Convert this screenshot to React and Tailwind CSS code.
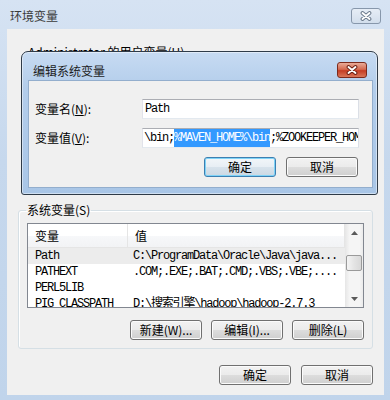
import React from "react";

const MONO = "font-['Liberation_Mono','Noto_Sans_CJK_SC',monospace] text-[12px] tracking-[-1.2px]";

const ROWS = [
  { name: "Path", value: "C:\\ProgramData\\Oracle\\Java\\java...", selected: true },
  { name: "PATHEXT", value: ".COM;.EXE;.BAT;.CMD;.VBS;.VBE;...." },
  { name: "PERL5LIB", value: "" },
  { name: "PIG_CLASSPATH", value: "D:\\搜索引擎\\hadoop\\hadoop-2.7.3" },
];

function XGlyph({ outline }) {
  return (
    <svg width="12" height="10" viewBox="0 0 12 10">
      <path d="M2.5 2 L9.5 8 M9.5 2 L2.5 8" stroke={outline} strokeWidth="3.8" strokeLinecap="round" />
      <path d="M2.5 2 L9.5 8 M9.5 2 L2.5 8" stroke="#ffffff" strokeWidth="1.9" strokeLinecap="round" />
    </svg>
  );
}

function Arrow({ up }) {
  return (
    <svg width="7" height="4" viewBox="0 0 7 4">
      <path d={up ? "M0 4 L3.5 0 L7 4 Z" : "M0 0 L7 0 L3.5 4 Z"} fill="#5a5a5a" />
    </svg>
  );
}

function WinButton({ children, primary }) {
  return (
    <div
      className={
        primary
          ? "w-[72px] h-[20px] flex items-center justify-center rounded-[3px] border border-[#3c7fb1] bg-[linear-gradient(#f2f6f9,#e7eef4_50%,#d8e3ec_50%,#cbd8e3)] shadow-[inset_0_0_0_1px_#7fd3f7] text-[12px] leading-none"
          : "w-[72px] h-[20px] flex items-center justify-center rounded-[3px] border border-[#707070] bg-[linear-gradient(#f2f2f2,#ebebeb_50%,#dddddd_50%,#cfcfcf)] shadow-[inset_0_0_0_1px_#fbfbfb] text-[12px] leading-none"
      }
    >
      {children}
    </div>
  );
}

function ListView() {
  return (
    <div className="h-[85px] flex border border-[#828790] bg-white overflow-hidden">
      <div className="flex-1 min-w-0 flex flex-col">
        <div className="h-[24px] shrink-0 flex border-b border-[#e5e5e5] bg-[linear-gradient(#ffffff,#ffffff_50%,#f7f8fa_50%,#f2f3f5)] text-[12px]">
          <div className="w-[100px] pl-[7px] flex items-center border-r border-[#e5e5e5]">变量</div>
          <div className="flex-1 pl-[7px] flex items-center border-r border-[#e5e5e5]">值</div>
        </div>
        {ROWS.map((r) => (
          <div
            key={r.name}
            className={`h-[16px] shrink-0 flex items-center whitespace-nowrap ${MONO} ${r.selected ? "bg-[#ececec]" : ""}`}
          >
            <span className="w-[100px] pl-[7px]">{r.name}</span>
            <span className="pl-[5px]">{r.value}</span>
          </div>
        ))}
      </div>
      <div className="w-[18px] shrink-0 flex flex-col bg-[linear-gradient(90deg,#e6e6e6,#f5f5f5_25%,#f5f5f5_80%,#ebebeb)]">
        <div className="h-[17px] flex items-center justify-center">
          <Arrow up />
        </div>
        <div className="flex-1 px-[1px]">
          <div className="mt-[14px] h-[16px] rounded-[2px] border border-[#9a9a9a] bg-[linear-gradient(90deg,#f4f4f4,#e4e4e4_50%,#d8d8d8)]" />
        </div>
        <div className="h-[17px] flex items-center justify-center">
          <Arrow />
        </div>
      </div>
    </div>
  );
}

function EditDialog() {
  return (
    <div className="absolute left-[14px] top-[22px] w-[357px] h-[144px] flex flex-col rounded-t-[7px] rounded-b-[3px] border border-[#2f3b48] bg-[linear-gradient(#c7dbf2,#b3cdeb_25%,#a9c6e7)] shadow-[inset_0_0_0_1px_rgba(255,255,255,0.45)]">
      <div className="h-[29px] shrink-0 flex justify-between pl-[11px] pr-[10px]">
        <span className="mt-[11px] text-[12px] leading-[16px] text-[#1c1c1c]">编辑系统变量</span>
        <div className="mt-[10px] w-[30px] h-[16px] rounded-[3px] border border-[#7c2a1c] bg-[linear-gradient(#e9ab98,#d46a50_45%,#c53d24_55%,#d9775a)] flex items-center justify-center">
          <XGlyph outline="#6d2114" />
        </div>
      </div>
      <div className="ml-[7px] mr-[5px] h-[106px] bg-[#f0f0f0] shadow-[0_0_0_1px_#93aecd]">
        <div className="pt-[18px] pl-[6px] pr-[13px] flex flex-col gap-[9px]">
          <div className="h-[20px] flex items-center">
            <span className="w-[107px] text-[12px]">
              变量名(<span className="underline">N</span>):
            </span>
            <div className={`w-[217px] h-[20px] flex items-center pl-[2px] bg-white border border-[#abadb3] border-l-[#e2e3ea] border-r-[#dbdfe6] border-b-[#e3e9ef] whitespace-nowrap overflow-hidden ${MONO}`}>
              Path
            </div>
          </div>
          <div className="h-[20px] flex items-center">
            <span className="w-[107px] text-[12px]">
              变量值(<span className="underline">V</span>):
            </span>
            <div className={`w-[217px] h-[20px] flex items-center pl-[1px] bg-white border border-[#abadb3] border-l-[#e2e3ea] border-r-[#dbdfe6] border-b-[#e3e9ef] whitespace-nowrap overflow-hidden ${MONO}`}>
              <span>\bin;</span>
              <span className="bg-[#3399ff] text-white">%MAVEN_HOME%\bin</span>
              <span>;%ZOOKEEPER_HOME%\bin</span>
            </div>
          </div>
        </div>
        <div className="mt-[9px] pr-[14px] flex justify-end gap-[10px]">
          <WinButton primary>确定</WinButton>
          <WinButton>取消</WinButton>
        </div>
      </div>
    </div>
  );
}

export default function App() {
  return (
    <div className="w-[390px] h-[400px] flex flex-col overflow-hidden bg-[linear-gradient(#d6e3f3,#c6d8ed_40%,#c0d4eb)] font-['Noto_Sans_CJK_SC',sans-serif] text-black">
      <div className="h-[29px] shrink-0 flex justify-between pl-[10px] pr-[9px]">
        <span className="mt-[8px] text-[12px] leading-[16px] text-[#3a3a3a]">环境变量</span>
        <div className="mt-[8px] w-[30px] h-[16px] rounded-[3px] border border-[#8797ab] bg-[linear-gradient(#e6edf6,#d2deec)] flex items-center justify-center">
          <XGlyph outline="#6b7a8c" />
        </div>
      </div>

      <div className="relative ml-[7px] mr-[6px] h-[366px] shrink-0 bg-[#f0f0f0]">
        <div className="h-[174px] pt-[16px] pl-[21px] text-[12px] leading-[14px]">Administrator 的用户变量(U)</div>

        <fieldset className="mx-[11px] px-[8px] pt-[6px] pb-[8px] border border-[#d5dfe5] rounded-[3px] shadow-[inset_1px_1px_0_#ffffff]">
          <legend className="text-[12px] leading-[14px] px-[1px] -ml-[1px]">系统变量(S)</legend>
          <ListView />
          <div className="mt-[12px] flex justify-end gap-[9px]">
            <WinButton>新建(W)...</WinButton>
            <WinButton>编辑(I)...</WinButton>
            <WinButton>删除(L)</WinButton>
          </div>
        </fieldset>

        <div className="mt-[16px] pr-[11px] flex justify-end gap-[10px]">
          <WinButton>确定</WinButton>
          <WinButton>取消</WinButton>
        </div>

        <EditDialog />
      </div>
    </div>
  );
}
